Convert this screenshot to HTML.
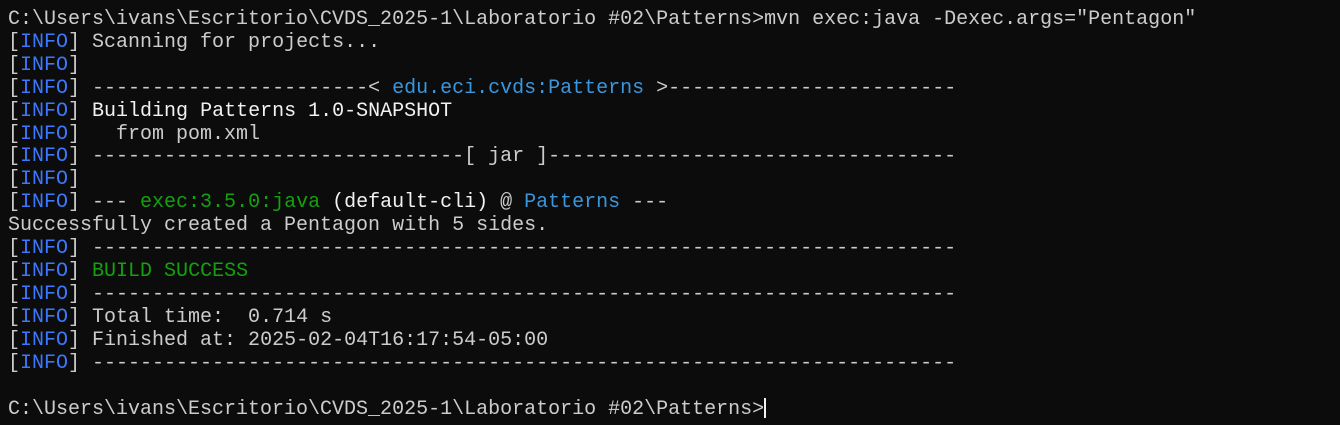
<!DOCTYPE html>
<html><head><meta charset="utf-8"><style>
html,body{margin:0;padding:0;background:#0c0c0c;width:1340px;height:425px;overflow:hidden}
pre{margin:0;padding:9px 0 0 8px;font-family:"Liberation Mono","DejaVu Sans Mono",monospace;font-size:20px;line-height:22.9px;color:#cccccc;white-space:pre}
.b{color:#3b78ff}.g{color:#13a10e}.c{color:#3a96dd}.w{color:#f2f2f2}
.cur{display:inline-block;width:2px;height:20px;background:#f2f2f2;vertical-align:-4px}
</style></head><body><pre>C:\Users\ivans\Escritorio\CVDS_2025-1\Laboratorio #02\Patterns>mvn exec:java -Dexec.args="Pentagon"
[<span class="b">INFO</span>] Scanning for projects...
[<span class="b">INFO</span>]
[<span class="b">INFO</span>] -----------------------&lt; <span class="c">edu.eci.cvds:Patterns</span> &gt;------------------------
[<span class="b">INFO</span>] <span class="w">Building Patterns 1.0-SNAPSHOT</span>
[<span class="b">INFO</span>]   from pom.xml
[<span class="b">INFO</span>] -------------------------------[ jar ]----------------------------------
[<span class="b">INFO</span>]
[<span class="b">INFO</span>] --- <span class="g">exec:3.5.0:java</span> <span class="w">(default-cli)</span> @ <span class="c">Patterns</span> ---
Successfully created a Pentagon with 5 sides.
[<span class="b">INFO</span>] ------------------------------------------------------------------------
[<span class="b">INFO</span>] <span class="g">BUILD SUCCESS</span>
[<span class="b">INFO</span>] ------------------------------------------------------------------------
[<span class="b">INFO</span>] Total time:  0.714 s
[<span class="b">INFO</span>] Finished at: 2025-02-04T16:17:54-05:00
[<span class="b">INFO</span>] ------------------------------------------------------------------------

C:\Users\ivans\Escritorio\CVDS_2025-1\Laboratorio #02\Patterns&gt;<span class="cur"></span></pre></body></html>
